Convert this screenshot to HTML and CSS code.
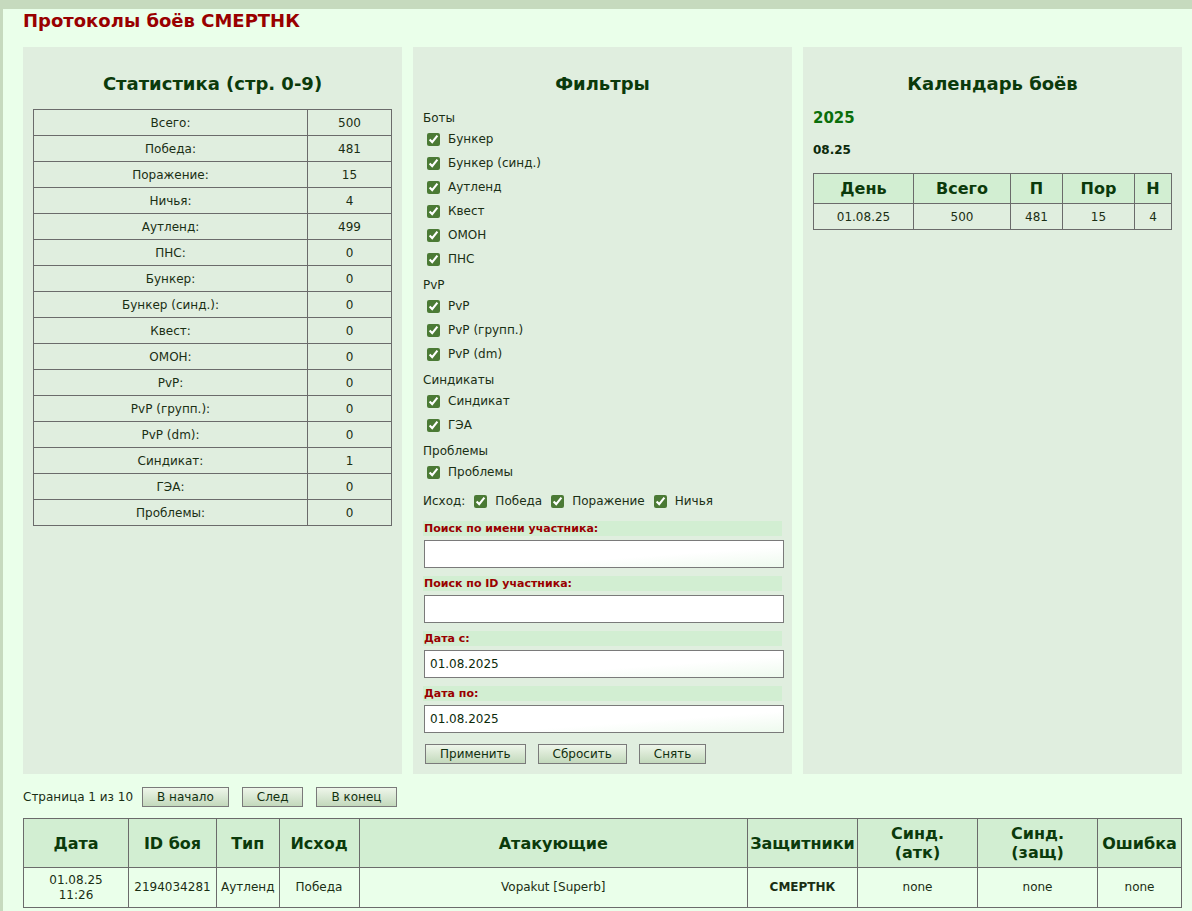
FILE: index.html
```
<!DOCTYPE html>
<html lang="ru">
<head>
    <meta charset="UTF-8">
    <meta name="viewport" content="width=device-width, initial-scale=1.0">
    <title>Протоколы боёв СМЕРТНК</title>
    <link rel="stylesheet" href="styles.css">
</head>
<body>
<div class="page">

    <h1>Протоколы боёв СМЕРТНК</h1>

    <div class="panels">
        <div class="panel">
            <h2>Статистика (стр. 0-9)</h2>
            <table class="stats">
                <tr><td>Всего:</td><td>500</td></tr>
                <tr><td>Победа:</td><td>481</td></tr>
                <tr><td>Поражение:</td><td>15</td></tr>
                <tr><td>Ничья:</td><td>4</td></tr>
                <tr><td>Аутленд:</td><td>499</td></tr>
                <tr><td>ПНС:</td><td>0</td></tr>
                <tr><td>Бункер:</td><td>0</td></tr>
                <tr><td>Бункер (синд.):</td><td>0</td></tr>
                <tr><td>Квест:</td><td>0</td></tr>
                <tr><td>ОМОН:</td><td>0</td></tr>
                <tr><td>PvP:</td><td>0</td></tr>
                <tr><td>PvP (групп.):</td><td>0</td></tr>
                <tr><td>PvP (dm):</td><td>0</td></tr>
                <tr><td>Синдикат:</td><td>1</td></tr>
                <tr><td>ГЭА:</td><td>0</td></tr>
                <tr><td>Проблемы:</td><td>0</td></tr>
            </table>
        </div>

        <form class="panel filters" id="filterForm">
            <h2>Фильтры</h2>

            <div class="group-title">Боты</div>
            <label class="check"><input type="checkbox" checked> Бункер</label>
            <label class="check"><input type="checkbox" checked> Бункер (синд.)</label>
            <label class="check"><input type="checkbox" checked> Аутленд</label>
            <label class="check"><input type="checkbox" checked> Квест</label>
            <label class="check"><input type="checkbox" checked> ОМОН</label>
            <label class="check"><input type="checkbox" checked> ПНС</label>

            <div class="group-title">PvP</div>
            <label class="check"><input type="checkbox" checked> PvP</label>
            <label class="check"><input type="checkbox" checked> PvP (групп.)</label>
            <label class="check"><input type="checkbox" checked> PvP (dm)</label>

            <div class="group-title">Синдикаты</div>
            <label class="check"><input type="checkbox" checked> Синдикат</label>
            <label class="check"><input type="checkbox" checked> ГЭА</label>

            <div class="group-title">Проблемы</div>
            <label class="check"><input type="checkbox" checked> Проблемы</label>

            <div class="outcome">
                <span>Исход:</span>
                <label><input type="checkbox" checked> Победа</label>
                <label><input type="checkbox" checked> Поражение</label>
                <label><input type="checkbox" checked> Ничья</label>
            </div>

            <label class="field-label" for="name">Поиск по имени участника:</label>
            <input class="field" type="text" id="name">

            <label class="field-label" for="pid">Поиск по ID участника:</label>
            <input class="field plain" type="text" id="pid">

            <label class="field-label" for="dfrom">Дата с:</label>
            <input class="field" type="text" id="dfrom" value="01.08.2025">

            <label class="field-label" for="dto">Дата по:</label>
            <input class="field" type="text" id="dto" value="01.08.2025">

            <div class="buttons">
                <button type="submit" class="btn">Применить</button>
                <button type="button" class="btn">Сбросить</button>
                <button type="button" class="btn">Снять</button>
            </div>
        </form>

        <div class="panel">
            <h2>Календарь боёв</h2>
            <div class="year">2025</div>
            <div class="month">08.25</div>
            <table class="calendar">
                <tr><th class="c-day">День</th><th class="c-total">Всего</th><th class="c-win">П</th><th class="c-loss">Пор</th><th>Н</th></tr>
                <tr><td>01.08.25</td><td>500</td><td>481</td><td>15</td><td>4</td></tr>
            </table>
        </div>
    </div>

    <div class="pager">
        <span>Страница 1 из 10</span>
        <button class="btn">В начало</button>
        <button class="btn">След</button>
        <button class="btn">В конец</button>
    </div>

    <table class="battles">
        <tr>
            <th class="w-date">Дата</th>
            <th class="w-id">ID боя</th>
            <th class="w-type">Тип</th>
            <th class="w-res">Исход</th>
            <th>Атакующие</th>
            <th class="w-def">Защитники</th>
            <th class="w-synd">Синд.<br>(атк)</th>
            <th class="w-synd">Синд.<br>(защ)</th>
            <th class="w-err">Ошибка</th>
        </tr>
        <tr>
            <td>01.08.25<br>11:26</td>
            <td>2194034281</td>
            <td>Аутленд</td>
            <td>Победа</td>
            <td>Vopakut [Superb]</td>
            <td class="defender">СМЕРТНК</td>
            <td>none</td>
            <td>none</td>
            <td>none</td>
        </tr>
    </table>

</div>
</body>
</html>
```

FILE: styles.css
```
body {
    margin: 0;
    background: #c6dabe;
    font-family: "DejaVu Sans", Verdana, sans-serif;
    font-size: 12px;
    color: #1a2e14;
}
.page {
    margin: 9px 0 0 3px;
    padding: 0 10px 20px 20px;
    background: #eaffea;
    min-height: 900px;
}
h1 {
    margin: 0;
    padding-top: 1px;
    font-size: 18px;
    line-height: 22px;
    color: #990000;
}
.panels {
    display: flex;
    gap: 11px;
    margin-top: 15px;
}
.panel {
    flex: 1 1 0;
    min-width: 0;
    padding: 10px;
    background: #e0eedf;
}
h2 {
    margin: 15px 0 13px;
    font-size: 18px;
    line-height: 24px;
    text-align: center;
    color: #0b3a0b;
}
table {
    border-collapse: collapse;
}
td, th {
    border: 1px solid #6b6b6b;
    text-align: center;
}
.stats {
    width: 100%;
}
.stats td {
    height: 25px;
    padding: 0;
}
.stats td:last-child {
    width: 83px;
}
.group-title {
    line-height: 18px;
    margin-top: 5px;
}
.filters h2 {
    margin-bottom: 13px;
}
.check {
    display: flex;
    align-items: center;
    height: 24px;
    gap: 5px;
}
input[type="checkbox"] {
    accent-color: #4b7a35;
    width: 13px;
    height: 13px;
}
.outcome {
    display: flex;
    align-items: center;
    height: 24px;
    margin-top: 5px;
}
.outcome label {
    display: flex;
    align-items: center;
    gap: 5px;
    margin-left: 6px;
}
.outcome input {
    margin-left: 3px;
}
.field-label {
    display: block;
    margin-top: 8px;
    padding-left: 1px;
    background: #d2eed2;
    color: #990000;
    font-weight: bold;
    font-size: 11px;
    line-height: 15px;
}
.field {
    display: block;
    box-sizing: border-box;
    width: 360px;
    height: 28px;
    margin: 4px 0 0 1px;
    padding: 0 5px;
    border: 1px solid #7a7a7a;
    background: linear-gradient(to bottom right, #ffffff 60%, #eefaee);
    font-family: "DejaVu Sans", Verdana, sans-serif;
    font-size: 12px;
    color: #0b2a0b;
}
.field.plain {
    background: #ffffff;
}
.buttons {
    display: flex;
    gap: 12px;
    margin: 11px 0 0 2px;
}
.btn {
    height: 20px;
    padding: 0 14px;
    border: 1px solid #7a7a7a;
    background: linear-gradient(#eef6ea, #c3d9bc);
    font-family: "DejaVu Sans", Verdana, sans-serif;
    font-size: 12px;
    color: #12300f;
    cursor: pointer;
}
.btn:hover {
    background: linear-gradient(#f6fbf3, #d0e4c9);
}
.year {
    margin-top: 0;
    font-size: 15px;
    font-weight: bold;
    line-height: 18px;
    color: #0b6e0b;
}
.month {
    margin-top: 15px;
    font-size: 12px;
    font-weight: bold;
    line-height: 16px;
    color: #0b2a0b;
}
.calendar {
    width: 100%;
    margin-top: 15px;
}
.calendar th {
    height: 29px;
    padding: 0;
    background: #d2eed2;
    font-size: 16px;
    color: #0b3a0b;
}
.calendar td {
    height: 25px;
    padding: 0;
}
.c-day { width: 99px; }
.c-total { width: 96px; }
.c-win { width: 51px; }
.c-loss { width: 71px; }
.pager {
    display: flex;
    align-items: center;
    gap: 13px;
    margin-top: 13px;
}
.pager span {
    margin-right: -4px;
}
.battles {
    width: 100%;
    margin-top: 11px;
}
.battles th {
    height: 48px;
    padding: 0;
    background: #d2eed2;
    font-size: 16px;
    line-height: 19px;
    color: #0b3a0b;
}
.battles td {
    height: 39px;
    padding: 0 4px;
    background: #eaffea;
    line-height: 15px;
}
.w-date { width: 104px; }
.w-id { width: 87px; }
.w-type { width: 61px; }
.w-res { width: 79px; }
.w-def { width: 109px; }
.w-synd { width: 119px; }
.w-err { width: 83px; }
.defender {
    font-weight: bold;
}
```
